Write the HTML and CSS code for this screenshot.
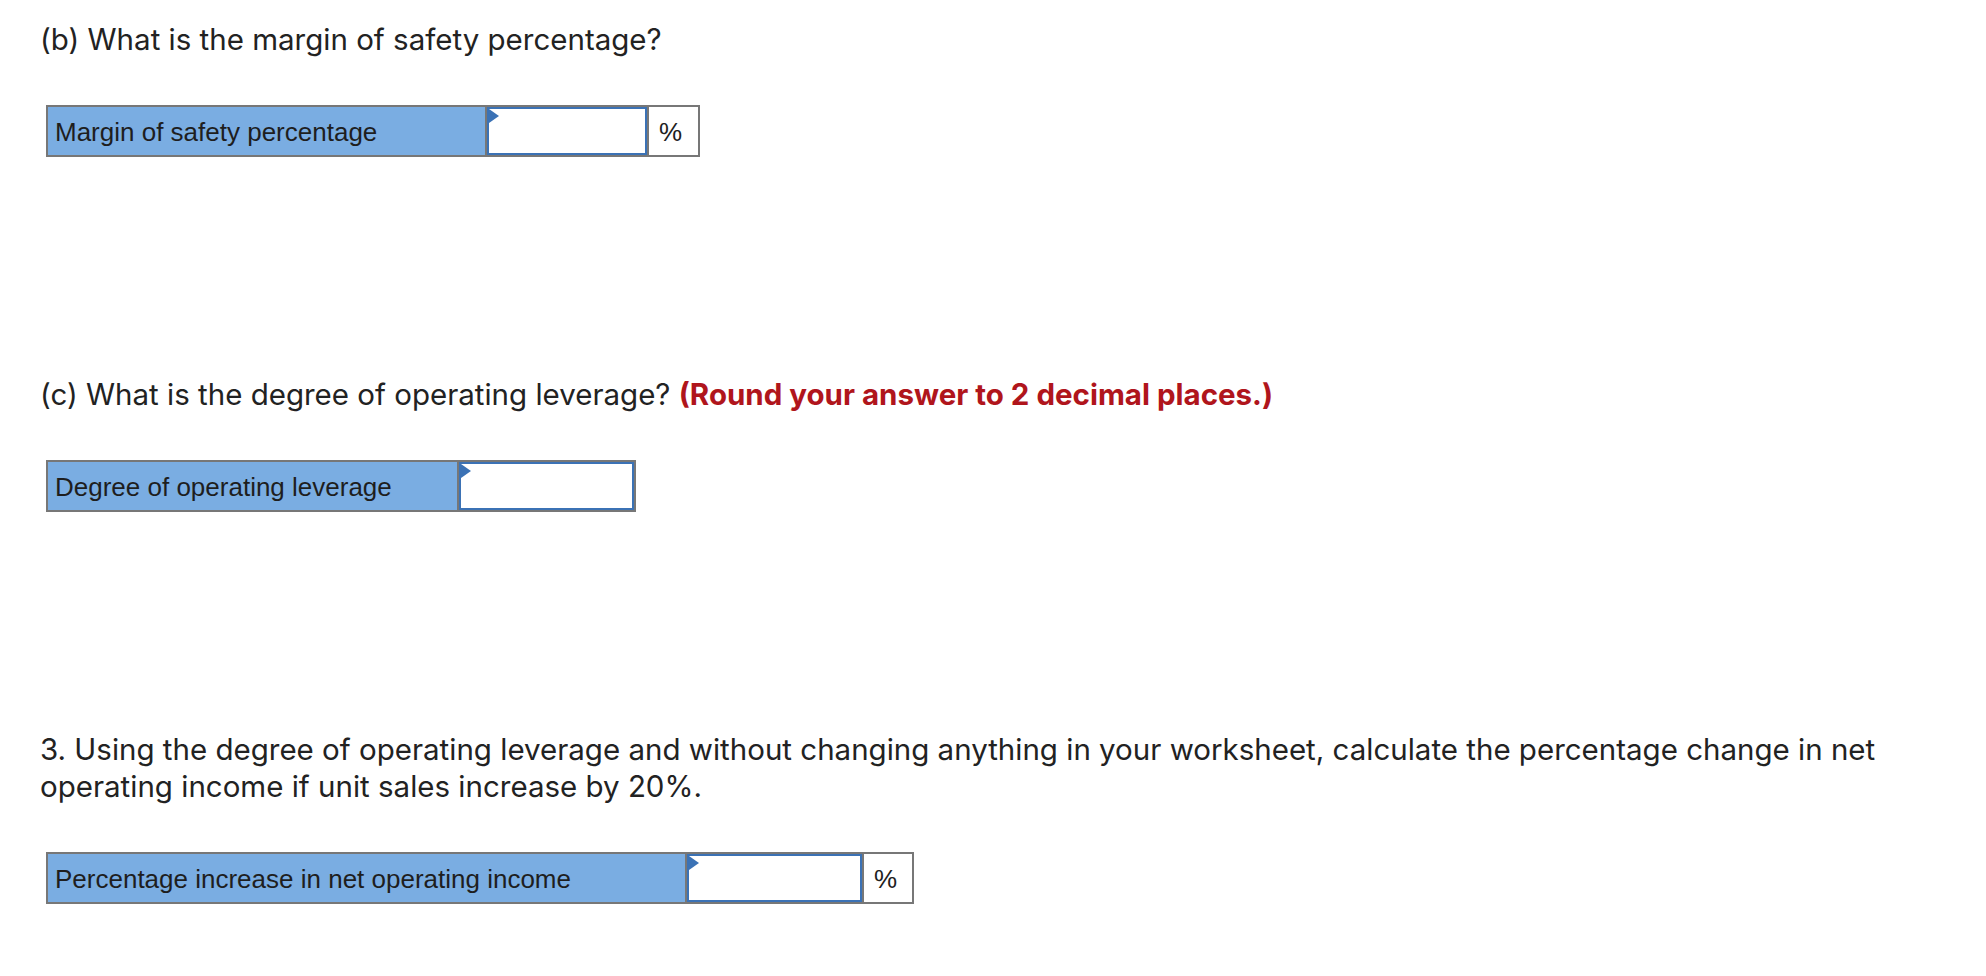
FILE: index.html
```html
<!DOCTYPE html>
<html lang="en">
<head>
<meta charset="utf-8">
<title>Operating leverage</title>
<link rel="stylesheet" href="styles.css">
</head>
<body>
<main class="page">
  <section class="question">
    <p class="prompt">(b) What is the margin of safety percentage?</p>
    <div class="answer-row row-b">
      <div class="label-cell">Margin of safety percentage</div>
      <div class="input-cell"><div class="input-box"><span class="marker"></span></div></div>
      <div class="unit-cell">%</div>
    </div>
  </section>
  <section class="question">
    <p class="prompt">(c) What is the degree of operating leverage? <strong class="note">(Round your answer to 2 decimal places.)</strong></p>
    <div class="answer-row row-c">
      <div class="label-cell">Degree of operating leverage</div>
      <div class="input-cell"><div class="input-box"><span class="marker"></span></div></div>
    </div>
  </section>
  <section class="question">
    <p class="prompt">3. Using the degree of operating leverage and without changing anything in your worksheet, calculate the percentage change in net<br>operating income if unit sales increase by 20%.</p>
    <div class="answer-row row-3">
      <div class="label-cell">Percentage increase in net operating income</div>
      <div class="input-cell"><div class="input-box"><span class="marker"></span></div></div>
      <div class="unit-cell">%</div>
    </div>
  </section>
</main>
</body>
</html>
```

FILE: styles.css
```css
html, body {
  margin: 0;
  padding: 0;
  background: #ffffff;
}

.page {
  padding: 18px 0 0 40px;
  font-family: Inter, Lato, "Liberation Sans", sans-serif;
  color: #222222;
}

.question + .question {
  margin-top: 216px;
}

.prompt {
  margin: 0 0 47px 0;
  padding-top: 3px;
  font-size: 29.5px;
  line-height: 37px;
  white-space: nowrap;
}

.note {
  color: #b0151c;
  font-weight: 700;
}

.answer-row {
  display: flex;
  margin-left: 6px;
  border: 2px solid #777777;
  height: 48px;
  font-family: "Liberation Sans", Arial, sans-serif;
  font-size: 26px;
  color: #1e1e1e;
}

.row-b { width: 650px; }
.row-c { width: 586px; }
.row-3 { width: 864px; }

.label-cell {
  background: #7aade2;
  display: flex;
  align-items: center;
  padding: 3px 0 0 7px;
  box-sizing: border-box;
}

.row-b .label-cell { width: 437px; }
.row-c .label-cell { width: 409px; }
.row-3 .label-cell { width: 637px; }

.input-cell {
  border-left: 2px solid #777777;
  background: #ffffff;
}

.row-b .input-cell { width: 160px; }
.row-c .input-cell { width: 175px; }
.row-3 .input-cell { width: 175px; }

.input-box {
  position: relative;
  height: 100%;
  box-sizing: border-box;
  border: 2px solid #3b72b5;
  background: #ffffff;
}

.marker {
  position: absolute;
  top: 0;
  left: 0;
  width: 0;
  height: 0;
  border-top: 7px solid transparent;
  border-bottom: 7px solid transparent;
  border-left: 10px solid #3b72b5;
}

.unit-cell {
  flex: 1;
  border-left: 2px solid #777777;
  display: flex;
  align-items: center;
  padding: 3px 0 0 10px;
  background: #ffffff;
}
```
